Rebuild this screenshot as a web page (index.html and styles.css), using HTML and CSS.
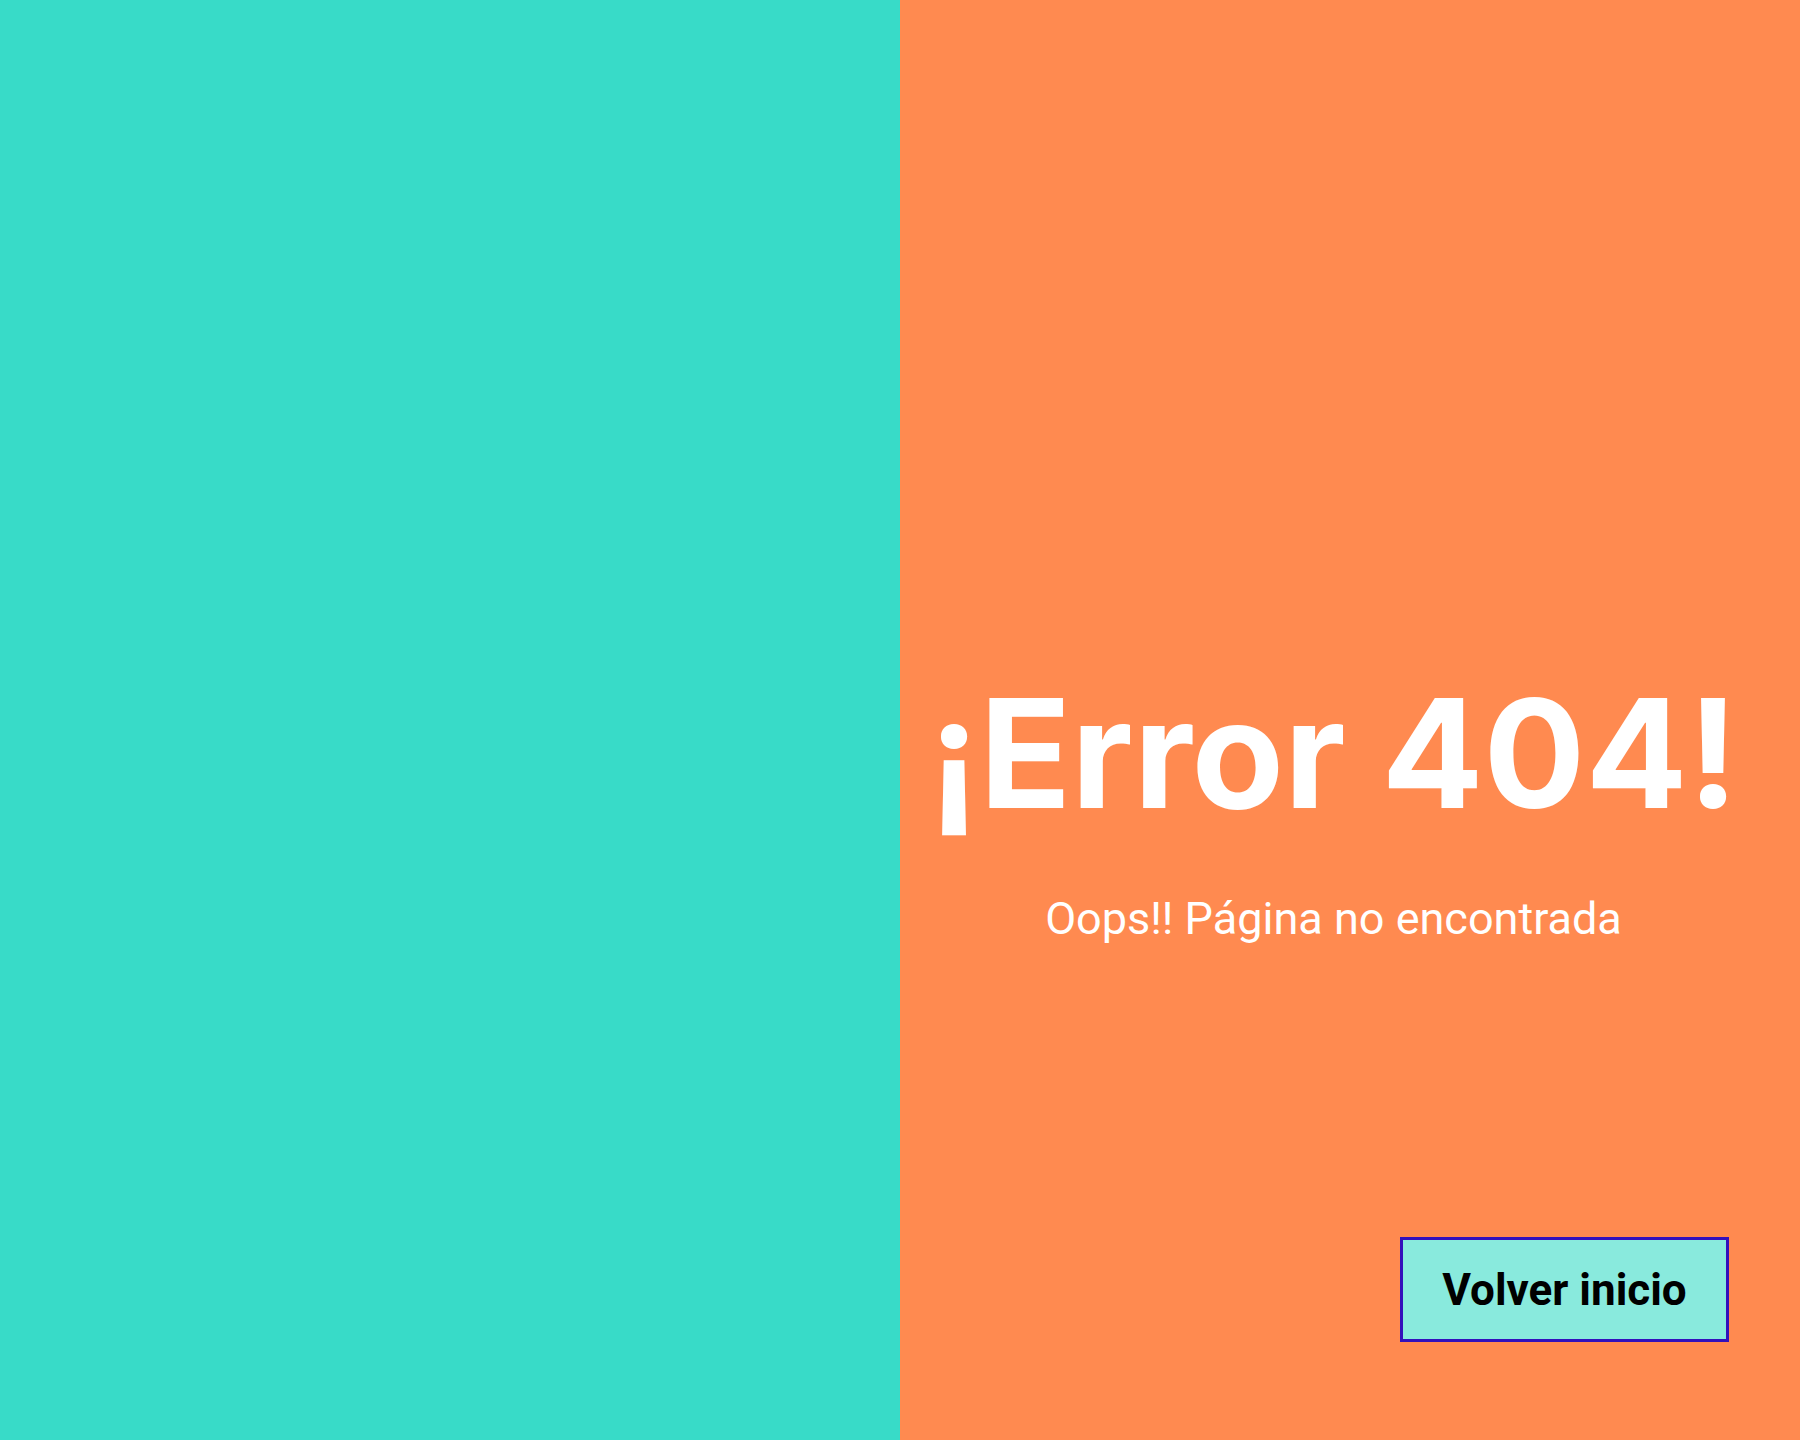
FILE: index.html
```html
<!DOCTYPE html>
<html lang="es">
<head>
<meta charset="utf-8">
<title>Error 404</title>
<link rel="stylesheet" href="styles.css">
</head>
<body>
<div class="page">
  <div class="left"></div>
  <div class="right">
    <div class="message">
      <h1 class="title">¡Error 404!</h1>
      <p class="subtitle">Oops!! Página no encontrada</p>
    </div>
    <a class="btn" href="#">Volver inicio</a>
  </div>
</div>
</body>
</html>
```

FILE: styles.css
```css
html, body {
  margin: 0;
  padding: 0;
}
body {
  font-family: Roboto, "Liberation Sans", sans-serif;
}
.page {
  display: grid;
  grid-template-columns: 900px 900px;
  height: 1440px;
}
.left {
  background: #38dbc8;
}
.right {
  background: #ff8a50;
  display: flex;
  flex-direction: column;
  padding-top: 678px;
  box-sizing: border-box;
}
.message {
  display: flex;
  flex-direction: column;
  align-items: center;
  padding-right: 33px;
  color: #ffffff;
}
.title {
  margin: 0;
  font-family: Inter, Roboto, sans-serif;
  font-size: 151px;
  font-weight: 700;
  line-height: 1;
}
.subtitle {
  margin: 67px 0 0;
  font-size: 45px;
  font-weight: 400;
  line-height: 1;
}
.btn {
  margin-top: auto;
  margin-right: 71px;
  margin-bottom: 98px;
  align-self: flex-end;
  width: 329px;
  height: 105px;
  box-sizing: border-box;
  display: flex;
  align-items: center;
  justify-content: center;
  background: #89eadd;
  border: 3px solid #3311bb;
  color: #000000;
  font-size: 44px;
  font-weight: 700;
  text-decoration: none;
  line-height: 1;
}
```
